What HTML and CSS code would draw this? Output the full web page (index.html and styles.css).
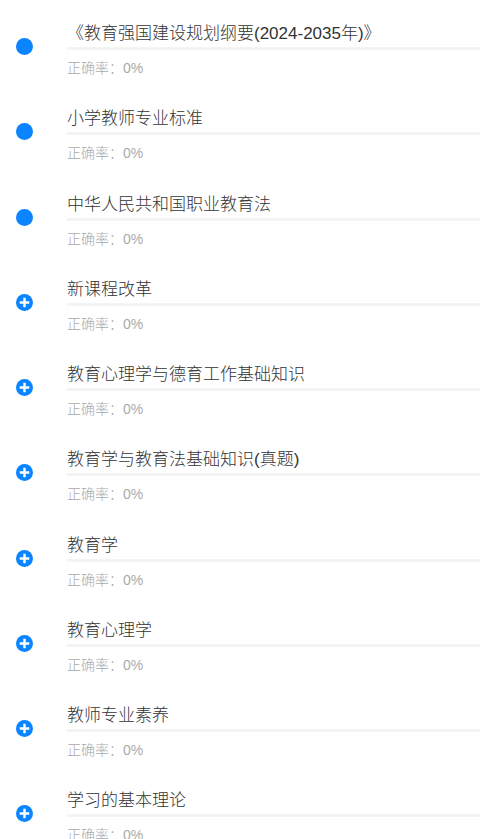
FILE: index.html
```html
<!DOCTYPE html>
<html lang="zh">
<head>
<meta charset="utf-8">
<link rel="stylesheet" href="styles.css">
</head>
<body>
<div class="list">
  <div class="row">
    <div class="icon-col"><span class="dot"></span></div>
    <div class="content">
      <div class="title">《教育强国建设规划纲要(2024-2035年)》</div>
      <div class="bar"></div>
      <div class="rate">正确率：0%</div>
    </div>
  </div>
  <div class="row">
    <div class="icon-col"><span class="dot"></span></div>
    <div class="content">
      <div class="title">小学教师专业标准</div>
      <div class="bar"></div>
      <div class="rate">正确率：0%</div>
    </div>
  </div>
  <div class="row">
    <div class="icon-col"><span class="dot"></span></div>
    <div class="content">
      <div class="title">中华人民共和国职业教育法</div>
      <div class="bar"></div>
      <div class="rate">正确率：0%</div>
    </div>
  </div>
  <div class="row">
    <div class="icon-col"><svg class="plus" viewBox="0 0 17 17"><circle cx="8.5" cy="8.5" r="8.5"/><path d="M8.5 3.7v9.6M3.7 8.5h9.6"/></svg></div>
    <div class="content">
      <div class="title">新课程改革</div>
      <div class="bar"></div>
      <div class="rate">正确率：0%</div>
    </div>
  </div>
  <div class="row">
    <div class="icon-col"><svg class="plus" viewBox="0 0 17 17"><circle cx="8.5" cy="8.5" r="8.5"/><path d="M8.5 3.7v9.6M3.7 8.5h9.6"/></svg></div>
    <div class="content">
      <div class="title">教育心理学与德育工作基础知识</div>
      <div class="bar"></div>
      <div class="rate">正确率：0%</div>
    </div>
  </div>
  <div class="row">
    <div class="icon-col"><svg class="plus" viewBox="0 0 17 17"><circle cx="8.5" cy="8.5" r="8.5"/><path d="M8.5 3.7v9.6M3.7 8.5h9.6"/></svg></div>
    <div class="content">
      <div class="title">教育学与教育法基础知识(真题)</div>
      <div class="bar"></div>
      <div class="rate">正确率：0%</div>
    </div>
  </div>
  <div class="row">
    <div class="icon-col"><svg class="plus" viewBox="0 0 17 17"><circle cx="8.5" cy="8.5" r="8.5"/><path d="M8.5 3.7v9.6M3.7 8.5h9.6"/></svg></div>
    <div class="content">
      <div class="title">教育学</div>
      <div class="bar"></div>
      <div class="rate">正确率：0%</div>
    </div>
  </div>
  <div class="row">
    <div class="icon-col"><svg class="plus" viewBox="0 0 17 17"><circle cx="8.5" cy="8.5" r="8.5"/><path d="M8.5 3.7v9.6M3.7 8.5h9.6"/></svg></div>
    <div class="content">
      <div class="title">教育心理学</div>
      <div class="bar"></div>
      <div class="rate">正确率：0%</div>
    </div>
  </div>
  <div class="row">
    <div class="icon-col"><svg class="plus" viewBox="0 0 17 17"><circle cx="8.5" cy="8.5" r="8.5"/><path d="M8.5 3.7v9.6M3.7 8.5h9.6"/></svg></div>
    <div class="content">
      <div class="title">教师专业素养</div>
      <div class="bar"></div>
      <div class="rate">正确率：0%</div>
    </div>
  </div>
  <div class="row">
    <div class="icon-col"><svg class="plus" viewBox="0 0 17 17"><circle cx="8.5" cy="8.5" r="8.5"/><path d="M8.5 3.7v9.6M3.7 8.5h9.6"/></svg></div>
    <div class="content">
      <div class="title">学习的基本理论</div>
      <div class="bar"></div>
      <div class="rate">正确率：0%</div>
    </div>
  </div>
</div>
</body>
</html>
```

FILE: styles.css
```css
html, body {
  margin: 0;
  padding: 0;
  background: #ffffff;
  font-family: "Liberation Sans", "Noto Sans CJK SC", sans-serif;
}
.list {
  padding-top: 4px;
}
.row {
  display: flex;
  height: 85.25px;
  box-sizing: border-box;
}
.icon-col {
  width: 67px;
  flex: none;
  display: flex;
  align-items: center;
  padding-left: 16px;
  box-sizing: border-box;
}
.dot {
  width: 17px;
  height: 17px;
  border-radius: 50%;
  background: #0a84ff;
  display: block;
}
.plus {
  width: 17px;
  height: 17px;
  display: block;
}
.plus circle {
  fill: #0a84ff;
}
.plus path {
  stroke: #ffffff;
  stroke-width: 2.4;
  stroke-linecap: butt;
  fill: none;
}
.content {
  flex: 1;
  padding-top: 18px;
  min-width: 0;
}
.title {
  font-size: 17px;
  font-weight: 300;
  line-height: 24px;
  height: 24px;
  color: #333333;
  white-space: nowrap;
}
.bar {
  height: 3px;
  background: #f4f4f4;
  margin-top: 1px;
}
.rate {
  margin-top: 8px;
  font-size: 14px;
  font-weight: 300;
  line-height: 20px;
  color: #aaaaaa;
}
```
